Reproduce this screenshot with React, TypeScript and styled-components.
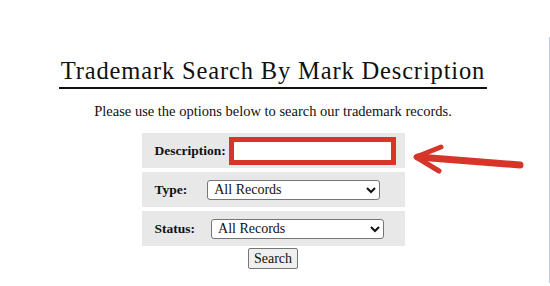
import React from 'react'
import styled, { createGlobalStyle } from 'styled-components'

const serif = '"Liberation Serif", "DejaVu Serif", serif'

const GlobalStyle = createGlobalStyle`
    html, body {
        margin: 0;
        padding: 0;
        background: #ffffff;
    }
    body {
        font-family: ${serif};
        color: #111111;
    }
`

const Page = styled.div`
    position: relative;
    display: flex;
    width: 550px;
    height: 286px;
    overflow: hidden;
`

const Main = styled.main`
    flex: 1;
    display: flex;
    flex-direction: column;
    align-items: center;
    padding-top: 57px;
`

const Rail = styled.div`
    width: 1px;
    margin: 37px 0 3px 3px;
    background: #bfcadb;
`

const Title = styled.h1`
    margin: 0;
    padding: 0 2px 2px;
    font-size: 24.5px;
    line-height: 28px;
    letter-spacing: 0.85px;
    font-weight: normal;
    color: #111111;
    border-bottom: 2px solid #111111;
`

const Intro = styled.p`
    margin: 13px 0 0;
    font-size: 14.5px;
    line-height: 18px;
    color: #111111;
`

const Form = styled.form`
    display: flex;
    flex-direction: column;
    align-items: center;
    gap: 4px;
    margin-top: 13px;
`

const Row = styled.div<{ $gap: number }>`
    display: flex;
    align-items: center;
    gap: ${({ $gap }) => $gap}px;
    box-sizing: border-box;
    width: 263px;
    height: 35px;
    padding-left: 13px;
    background: #e8e8e8;
`

const Label = styled.label`
    font-size: 13.5px;
    font-weight: bold;
    color: #111111;
`

const DescInput = styled.input`
    box-sizing: border-box;
    width: 167px;
    height: 28px;
    margin: 0;
    border: 5px solid #d8352a;
    background: #ffffff;
    outline: none;
`

const Select = styled.select`
    box-sizing: border-box;
    width: 173px;
    height: 20px;
    padding: 0 2px;
    font-family: ${serif};
    font-size: 14px;
    color: #111111;
    background: #ffffff;
    border: 1px solid #767676;
    border-radius: 3px;
`

const SearchButton = styled.button`
    margin-top: -2px;
    height: 21px;
    padding: 0 5px;
    font-family: ${serif};
    font-size: 14px;
    color: #111111;
    background: #efefef;
    border: 1px solid #767676;
    border-radius: 2px;
`

const Pointer = styled.svg`
    position: absolute;
    left: 405px;
    top: 140px;
`

const App = () => (
    <Page>
        <GlobalStyle />
        <Main>
            <Title>Trademark Search By Mark Description</Title>
            <Intro>Please use the options below to search our trademark records.</Intro>
            <Form onSubmit={(e) => e.preventDefault()}>
                <Row $gap={3}>
                    <Label htmlFor="desc">Description:</Label>
                    <DescInput id="desc" type="text" />
                </Row>
                <Row $gap={20}>
                    <Label htmlFor="type">Type:</Label>
                    <Select id="type" defaultValue="all">
                        <option value="all">All Records</option>
                    </Select>
                </Row>
                <Row $gap={16}>
                    <Label htmlFor="status">Status:</Label>
                    <Select id="status" defaultValue="all">
                        <option value="all">All Records</option>
                    </Select>
                </Row>
                <SearchButton type="submit">Search</SearchButton>
            </Form>
        </Main>
        <Rail />
        <Pointer width="125" height="40" viewBox="405 140 125 40">
            <path d="M520 165 L418 157" stroke="#d8352a" strokeWidth="7" strokeLinecap="round" fill="none" />
            <path d="M441 147 L416 157 L439 171" stroke="#d8352a" strokeWidth="5" strokeLinecap="round" strokeLinejoin="round" fill="none" />
        </Pointer>
    </Page>
)

export default App
